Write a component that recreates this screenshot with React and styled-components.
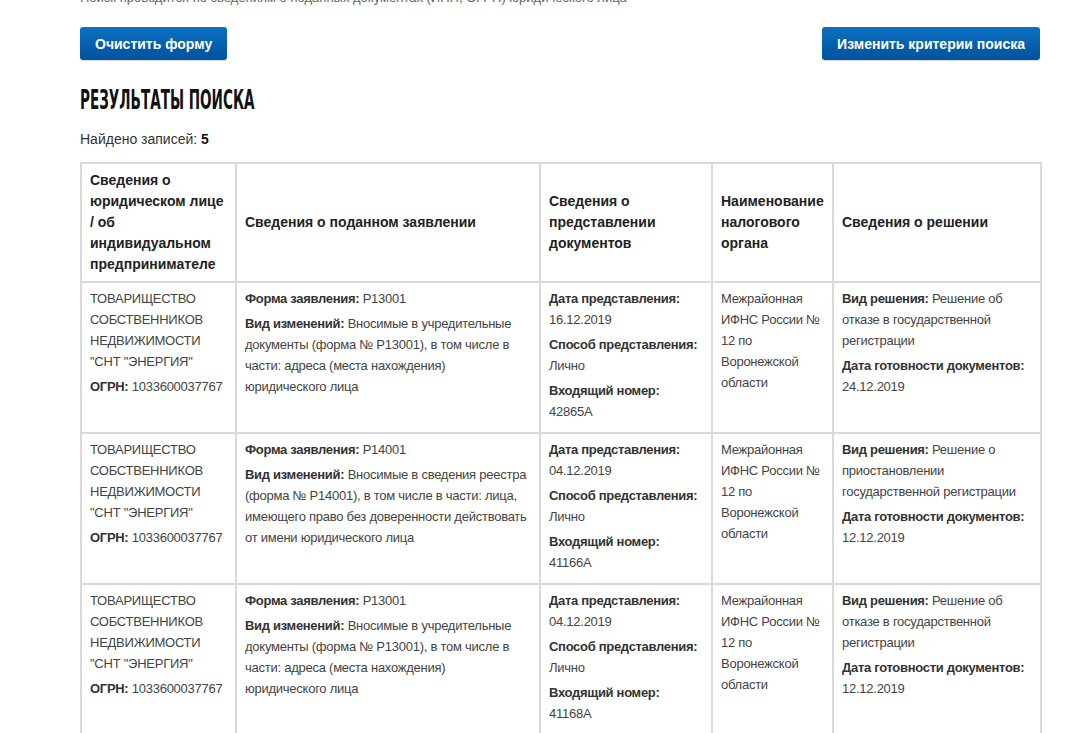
import styled, { createGlobalStyle } from "styled-components";

const GlobalStyle = createGlobalStyle`
  html, body {
    margin: 0;
    padding: 0;
    background: #fff;
    overflow: hidden;
  }
  body {
    font-family: "Liberation Sans", Arial, sans-serif;
    color: #333;
  }
`;

const Page = styled.div`
  width: 960px;
  margin-left: 80px;
`;

const TopNote = styled.p`
  margin: -9px 0 0;
  font-size: 13px;
  line-height: 14px;
  color: #666;
`;

const ButtonRow = styled.div`
  display: flex;
  justify-content: space-between;
  margin-top: 22px;
`;

const Button = styled.button`
  height: 33px;
  padding: 0 15px;
  border: none;
  border-radius: 3px;
  background: linear-gradient(to bottom, #0d70bf 0%, #0561b0 50%, #00529c 100%);
  box-shadow: 0 1px 1px rgba(0, 0, 0, 0.15);
  color: #fff;
  font-family: "Liberation Sans", Arial, sans-serif;
  font-size: 14px;
  font-weight: 700;
  cursor: pointer;
`;

const Title = styled.h2`
  margin: 25px 0 0;
  font-family: "Liberation Sans Narrow", "DejaVu Sans Condensed", sans-serif;
  font-size: 26px;
  line-height: 30px;
  font-weight: 700;
  color: #111;
  transform: scaleX(0.58);
  transform-origin: left center;
  white-space: nowrap;
`;

const Count = styled.p`
  margin: 15px 0 0;
  font-size: 14px;
  line-height: 18px;
  color: #333;

  b {
    color: #111;
  }
`;

const Table = styled.table`
  margin-top: 14px;
  width: 960px;
  border-collapse: collapse;
  table-layout: fixed;
  border: 2px solid #dadada;
`;

const Th = styled.th`
  width: ${(p) => p.$w - 20}px;
  padding: 6px 10px 6px 8px;
  border: 2px solid #dadada;
  text-align: left;
  vertical-align: middle;
  font-size: 14px;
  line-height: 21px;
  font-weight: 700;
  color: #222;
`;

const Td = styled.td`
  padding: 5px 10px 10px 8px;
  border: 2px solid #dadada;
  vertical-align: top;
  font-size: 13px;
  line-height: 21px;
  letter-spacing: -0.25px;
  color: #444;
`;

const Para = styled.p`
  margin: 0 0 4px;

  &:last-child {
    margin-bottom: 0;
  }
`;

const Label = styled.b`
  color: #333;
  letter-spacing: -0.3px;
`;

const columns = [
  { w: 155, title: "Сведения о юридическом лице / об индивидуальном предпринимателе" },
  { w: 304, title: "Сведения о поданном заявлении" },
  { w: 172, title: "Сведения о представлении документов" },
  { w: 121, title: "Наименование налогового органа" },
  { w: 208, title: "Сведения о решении" },
];

const rows = [
  {
    form: "Р13001",
    change:
      "Вносимые в учредительные документы (форма № Р13001), в том числе в части: адреса (места нахождения) юридического лица",
    date: "16.12.2019",
    num: "42865А",
    decision: "Решение об отказе в государственной регистрации",
    ready: "24.12.2019",
  },
  {
    form: "Р14001",
    change:
      "Вносимые в сведения реестра (форма № Р14001), в том числе в части: лица, имеющего право без доверенности действовать от имени юридического лица",
    date: "04.12.2019",
    num: "41166А",
    decision: "Решение о приостановлении государственной регистрации",
    ready: "12.12.2019",
  },
  {
    form: "Р13001",
    change:
      "Вносимые в учредительные документы (форма № Р13001), в том числе в части: адреса (места нахождения) юридического лица",
    date: "04.12.2019",
    num: "41168А",
    decision: "Решение об отказе в государственной регистрации",
    ready: "12.12.2019",
  },
];

const App = () => {
  return (
    <Page>
      <GlobalStyle />
      <TopNote>
        Поиск проводится по сведениям о поданных документах (ИНН, ОГРН) юридического лица
      </TopNote>
      <ButtonRow>
        <Button>Очистить форму</Button>
        <Button>Изменить критерии поиска</Button>
      </ButtonRow>
      <Title>РЕЗУЛЬТАТЫ ПОИСКА</Title>
      <Count>
        Найдено записей: <b>5</b>
      </Count>
      <Table>
        <thead>
          <tr>
            {columns.map((c) => (
              <Th key={c.title} $w={c.w}>
                {c.title}
              </Th>
            ))}
          </tr>
        </thead>
        <tbody>
          {rows.map((r, i) => (
            <tr key={i}>
              <Td>
                <Para>ТОВАРИЩЕСТВО СОБСТВЕННИКОВ НЕДВИЖИМОСТИ "СНТ "ЭНЕРГИЯ"</Para>
                <Para>
                  <Label>ОГРН:</Label> 1033600037767
                </Para>
              </Td>
              <Td>
                <Para>
                  <Label>Форма заявления:</Label> {r.form}
                </Para>
                <Para>
                  <Label>Вид изменений:</Label> {r.change}
                </Para>
              </Td>
              <Td>
                <Para>
                  <Label>Дата представления:</Label> {r.date}
                </Para>
                <Para>
                  <Label>Способ представления:</Label> Лично
                </Para>
                <Para>
                  <Label>Входящий номер:</Label> {r.num}
                </Para>
              </Td>
              <Td>Межрайонная ИФНС России № 12 по Воронежской области</Td>
              <Td>
                <Para>
                  <Label>Вид решения:</Label> {r.decision}
                </Para>
                <Para>
                  <Label>Дата готовности документов:</Label> {r.ready}
                </Para>
              </Td>
            </tr>
          ))}
        </tbody>
      </Table>
    </Page>
  );
};

export default App;
